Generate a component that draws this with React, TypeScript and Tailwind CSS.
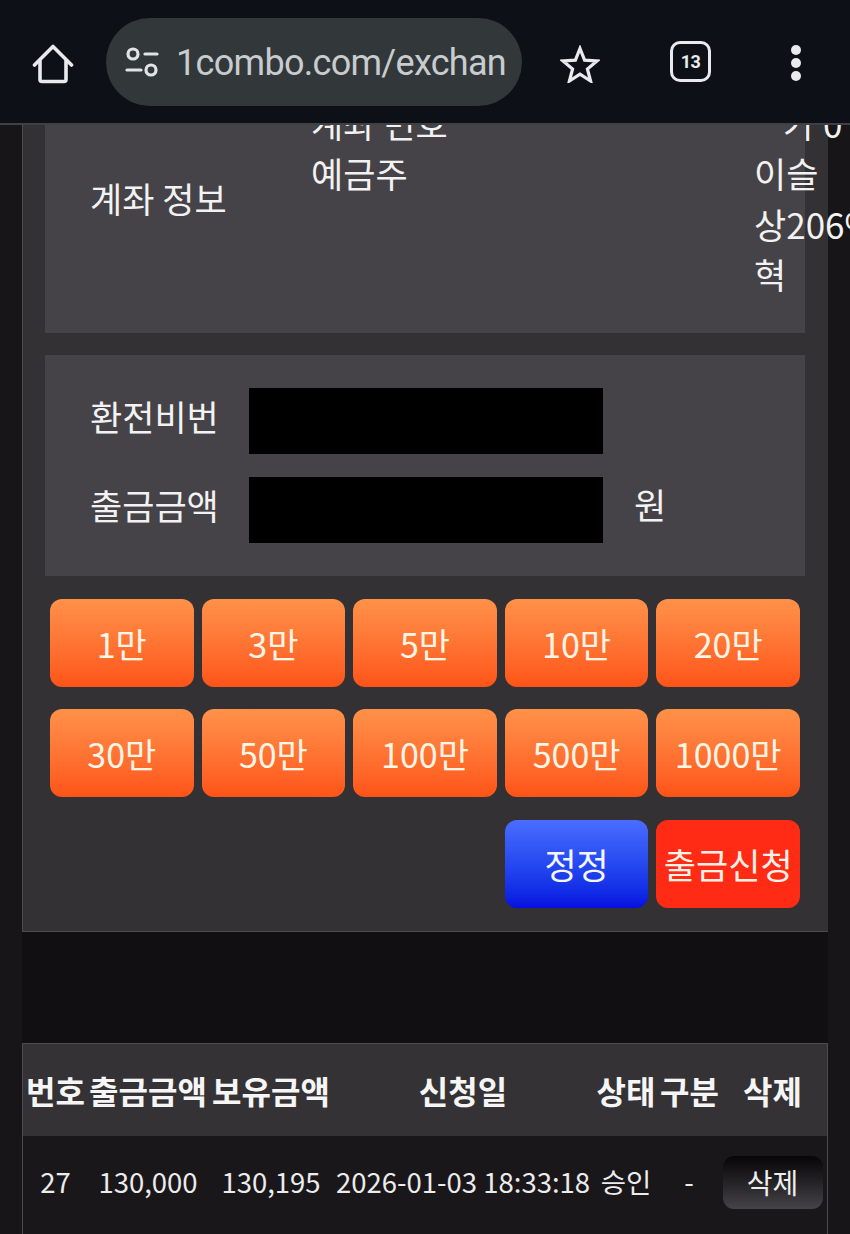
const koFont = "font-['Noto_Sans_CJK_KR','Noto_Sans',sans-serif]";

const amountRows = [
  ['1만', '3만', '5만', '10만', '20만'],
  ['30만', '50만', '100만', '500만', '1000만'],
];

const tableCols = 'grid grid-cols-[65px_120px_126px_258px_68px_58px_1fr]';

function HomeIcon() {
  return (
    <svg width="42" height="42" viewBox="0 0 42 42" fill="none" stroke="#e8eaed" strokeWidth="3.6" strokeLinejoin="round" strokeLinecap="round">
      <path d="M2.5 23 21 4.5 39.5 23" />
      <path d="M8 19v18.5a2 2 0 0 0 2 2h22a2 2 0 0 0 2-2V19" />
    </svg>
  );
}

function TuneIcon() {
  return (
    <svg width="34" height="30" viewBox="0 0 34 30" fill="none" stroke="#e1e4e6" strokeWidth="3.2" strokeLinecap="round">
      <circle cx="8" cy="7" r="5" />
      <path d="M20 7h12" />
      <path d="M2 23h14" />
      <circle cx="26" cy="23" r="5" />
    </svg>
  );
}

function StarIcon() {
  return (
    <svg width="40" height="38" viewBox="0 0 40 38" fill="none" stroke="#e8eaed" strokeWidth="3.2" strokeLinejoin="miter">
      <path d="M20 3.5 24.6 15.2 37 15.9 27.4 24 30.6 36 20 29.2 9.4 36 12.6 24 3 15.9 15.4 15.2Z" />
    </svg>
  );
}

function BrowserBar() {
  return (
    <header className="relative z-10 flex h-[125px] shrink-0 items-center border-b-2 border-[#3f4042] bg-[#0d1117]">
      <div className="ml-[32px] mt-[2px] flex w-[42px] justify-center">
        <HomeIcon />
      </div>
      <div className="ml-[32px] flex h-[88px] w-[416px] items-center overflow-hidden rounded-[44px] bg-[#32373a] pl-[19px]">
        <TuneIcon />
        <span className="ml-[17px] mt-[3px] whitespace-nowrap font-['Roboto',sans-serif] text-[36px] tracking-[-0.7px] text-[#c8cccf]">1combo.com/exchan</span>
      </div>
      <div className="ml-[38px] mt-[4px]">
        <StarIcon />
      </div>
      <div className="ml-[70px] flex h-[41px] w-[41px] items-center justify-center rounded-[10px] border-[3.5px] border-[#e8eaed] font-['Roboto',sans-serif] text-[18px] font-bold tracking-[-0.5px] text-[#e8eaed]">
        13
      </div>
      <div className="ml-[80px] mt-[2px] flex flex-col gap-[3px]">
        <span className="h-[10px] w-[10px] rounded-full bg-[#e8eaed]" />
        <span className="h-[10px] w-[10px] rounded-full bg-[#e8eaed]" />
        <span className="h-[10px] w-[10px] rounded-full bg-[#e8eaed]" />
      </div>
    </header>
  );
}

function AccountInfo() {
  return (
    <section className="flex h-[267px] items-center bg-[#454347] pb-[2px] text-[35px] leading-[50.5px] text-[#f2f2f2]">
      <div className="ml-[45px] w-[221px] shrink-0">계좌 정보</div>
      <div className="w-[443px] shrink-0">
        <div>계좌 번호</div>
        <div>예금주</div>
        <div>&nbsp;</div>
        <div>&nbsp;</div>
      </div>
      <div className="w-[100px] shrink-0 whitespace-nowrap">
        <div className="pl-[29px]">가 0</div>
        <div>이슬</div>
        <div>상206%</div>
        <div>혁</div>
      </div>
    </section>
  );
}

function WithdrawForm() {
  return (
    <section className="mt-[22px] flex h-[221px] flex-col justify-center gap-[23px] bg-[#454347] text-[35px] text-[#f2f2f2]">
      <div className="flex items-center">
        <label className="mb-[10px] ml-[45px] w-[159px] shrink-0">환전비번</label>
        <div className="h-[66px] w-[354px] bg-black" />
      </div>
      <div className="flex items-center">
        <label className="mb-[10px] ml-[45px] w-[159px] shrink-0">출금금액</label>
        <div className="h-[66px] w-[354px] bg-black" />
        <span className="mb-[12px] ml-[31px]">원</span>
      </div>
    </section>
  );
}

function AmountButton({ label }: { label: string }) {
  return (
    <button className="h-[88px] rounded-[12px] bg-gradient-to-b from-[#ff9149] to-[#ff5317] text-[34px] text-[#fff6e8]">
      {label}
    </button>
  );
}

function Buttons() {
  return (
    <div className="mt-[23px] flex flex-col gap-[22px] px-[5px]">
      {amountRows.map((row) => (
        <div key={row[0]} className="grid grid-cols-5 gap-[8px]">
          {row.map((label) => (
            <AmountButton key={label} label={label} />
          ))}
        </div>
      ))}
      <div className="mt-[1px] grid grid-cols-5 gap-[8px]">
        <button className="col-start-4 h-[88px] rounded-[12px] bg-gradient-to-b from-[#4a6cff] to-[#0a0ce0] text-[35px] text-[#f4f6ff]">
          정정
        </button>
        <button className="h-[88px] whitespace-nowrap rounded-[12px] bg-[#ff2b14] text-[35px] text-[#fff0e8]">
          출금신청
        </button>
      </div>
    </div>
  );
}

function HistoryTable() {
  const headers = ['번호', '출금금액', '보유금액', '신청일', '상태', '구분', '삭제'];
  return (
    <section className="mt-[111px] border-x border-t border-[#4d4b4e] bg-[#1a171a]">
      <div className={`${tableCols} h-[92px] items-center bg-[#353236] text-center text-[32px] font-bold text-[#f5f5f5]`}>
        {headers.map((h) => (
          <div key={h} className="whitespace-nowrap">
            {h}
          </div>
        ))}
      </div>
      <div className={`${tableCols} h-[98px] items-center pb-[6px] text-center text-[27.5px] text-[#ececec]`}>
        <div>27</div>
        <div>130,000</div>
        <div>130,195</div>
        <div className="whitespace-nowrap">2026-01-03 18:33:18</div>
        <div>승인</div>
        <div>-</div>
        <div className="flex justify-center">
          <button className="h-[53px] w-[100px] rounded-[11px] bg-gradient-to-b from-[#070608] to-[#464448] text-[28px] text-[#eeeeee]">
            삭제
          </button>
        </div>
      </div>
    </section>
  );
}

export default function App() {
  return (
    <div className={`${koFont} flex h-[1234px] w-[850px] flex-col overflow-hidden bg-[#171518]`}>
      <BrowserBar />
      <main className="mx-[22px] mt-[-59px] flex-1 bg-[#120f13]">
        <div className="border-b border-l border-[#4d4b4e] bg-[#333133] pb-[23px] pl-[22px] pr-[23px]">
          <AccountInfo />
          <WithdrawForm />
          <Buttons />
        </div>
        <HistoryTable />
      </main>
    </div>
  );
}
